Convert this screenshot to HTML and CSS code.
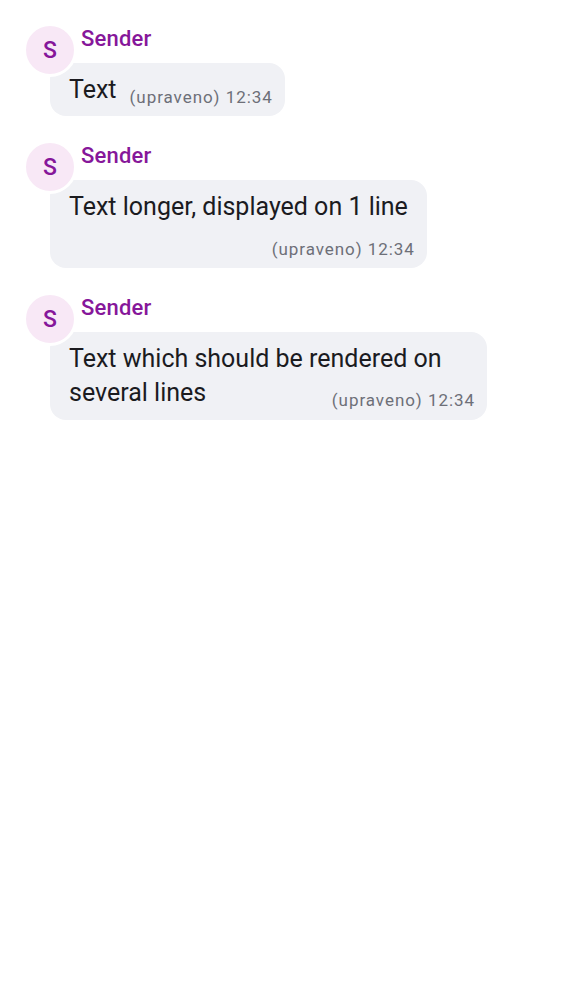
FILE: index.html
```html
<!DOCTYPE html>
<html lang="cs">
<head>
<meta charset="utf-8">
<title>Messages</title>
<link rel="stylesheet" href="styles.css">
</head>
<body>
<div class="thread">
  <div class="group">
    <div class="header">
      <div class="avatar">S</div>
      <div class="sender">Sender</div>
    </div>
    <div class="bubble">
      <span class="meta">(upraveno) 12:34</span>
      <span class="text">Text</span>
    </div>
  </div>

  <div class="group">
    <div class="header">
      <div class="avatar">S</div>
      <div class="sender">Sender</div>
    </div>
    <div class="bubble">
      <div class="text">Text longer, displayed on 1 line</div>
      <div class="meta meta--row">(upraveno) 12:34</div>
    </div>
  </div>

  <div class="group">
    <div class="header">
      <div class="avatar">S</div>
      <div class="sender">Sender</div>
    </div>
    <div class="bubble bubble--wrap">
      <span class="text">Text which should be rendered on several lines</span><span class="meta">(upraveno) 12:34</span>
    </div>
  </div>
</div>
</body>
</html>
```

FILE: styles.css
```css
* { box-sizing: border-box; }

html, body {
  margin: 0;
  background: #ffffff;
}

body {
  font-family: Roboto, "Noto Sans", "Liberation Sans", sans-serif;
  color: #1b1b1f;
}

.thread {
  display: flex;
  flex-direction: column;
  align-items: flex-start;
  gap: 24px;
  padding: 23px 0 0 23px;
}

.group {
  display: flex;
  flex-direction: column;
  align-items: flex-start;
}

.header {
  display: flex;
  align-items: flex-start;
  gap: 4px;
}

.avatar {
  position: relative;
  z-index: 1;
  width: 54px;
  height: 54px;
  border-radius: 50%;
  border: 3px solid #ffffff;
  background: #f8e8f6;
  color: #86179a;
  font-size: 23px;
  font-weight: 500;
  display: flex;
  align-items: center;
  justify-content: center;
}

.sender {
  margin-top: 3px;
  font-size: 22px;
  line-height: 26px;
  letter-spacing: 0.2px;
  font-weight: 500;
  color: #86179a;
}

.bubble {
  margin: -14px 0 0 27px;
  max-width: 437px;
  padding: 10px 19px 9px 19px;
  background: #f0f1f5;
  border-radius: 16px;
  font-size: 25px;
  line-height: 34px;
}

.bubble::after {
  content: "";
  display: block;
  clear: both;
}

.bubble--wrap {
  width: 437px;
  padding-bottom: 10px;
}

.meta {
  float: right;
  margin: 14px -7px 0 13px;
  font-size: 17px;
  line-height: 20px;
  letter-spacing: 0.95px;
  color: #6d6f78;
}

.meta--row {
  float: none;
  margin: 15px -7px 0 0;
  text-align: right;
}
```
